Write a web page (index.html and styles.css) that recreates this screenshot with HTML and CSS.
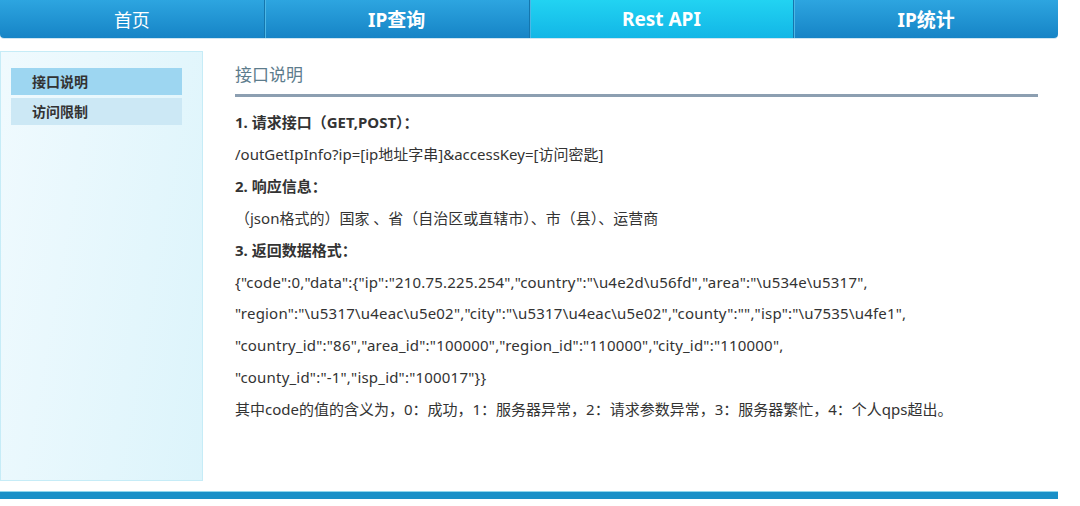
FILE: index.html
```html
<!DOCTYPE html>
<html lang="zh-CN">
<head>
<meta charset="utf-8">
<title>Rest API</title>
<link rel="stylesheet" href="styles.css">
</head>
<body>
<div class="page">
  <nav class="nav">
    <a class="tab tab-light">首页</a>
    <a class="tab">IP查询</a>
    <a class="tab active">Rest API</a>
    <a class="tab">IP统计</a>
  </nav>
  <div class="main">
    <aside class="side">
      <div class="item current">接口说明</div>
      <div class="item">访问限制</div>
    </aside>
    <section class="content">
      <h2 class="title">接口说明</h2>
      <p class="b first">1. 请求接口（GET,POST）：</p>
      <p>/outGetIpInfo?ip=[ip地址字串]&amp;accessKey=[访问密匙]</p>
      <p class="b">2. 响应信息：</p>
      <p>（json格式的）国家 、省（自治区或直辖市）、市（县）、运营商</p>
      <p class="b">3. 返回数据格式：</p>
      <p class="json">{"code":0,"data":{"ip":"210.75.225.254","country":"\u4e2d\u56fd","area":"\u534e\u5317",</p>
      <p class="json">"region":"\u5317\u4eac\u5e02","city":"\u5317\u4eac\u5e02","county":"","isp":"\u7535\u4fe1",</p>
      <p class="json">"country_id":"86","area_id":"100000","region_id":"110000","city_id":"110000",</p>
      <p class="json">"county_id":"-1","isp_id":"100017"}}</p>
      <p>其中code的值的含义为，0：成功，1：服务器异常，2：请求参数异常，3：服务器繁忙，4：个人qps超出。</p>
    </section>
  </div>
  <footer class="foot"></footer>
</div>
</body>
</html>
```
FILE: styles.css
```css
html, body {
  margin: 0;
  padding: 0;
  background: #fff;
}
body {
  font-family: "Noto Sans", "Noto Sans CJK SC", sans-serif;
  color: #333;
}
.page {
  width: 1058px;
}
.nav {
  display: flex;
  height: 38px;
  border-radius: 0 0 4px 4px;
  overflow: hidden;
  background: linear-gradient(#2da5e0, #1684c6);
  box-shadow: 0 1px 0 #cfe6f2;
}
.tab {
  flex: 1;
  display: flex;
  align-items: center;
  justify-content: center;
  color: #fff;
  font-size: 19px;
  font-weight: bold;
  font-family: "Noto Sans", "Noto Sans CJK SC", sans-serif;
}
.tab + .tab {
  border-left: 1px solid #1576ad;
  box-shadow: inset 1px 0 0 #4cb7e6;
}
.tab-light {
  font-weight: normal;
  font-size: 18px;
}
.tab.active {
  background: linear-gradient(#22d3f2, #12b6e6);
}
.main {
  display: flex;
  margin-top: 13px;
}
.side {
  width: 201px;
  height: 412px;
  border: 1px solid #c6ecf7;
  background: linear-gradient(100deg, #f0fafe, #dcf4fb);
  padding-top: 16px;
}
.item {
  margin: 0 20px 3px 10px;
  height: 27px;
  line-height: 27px;
  padding-left: 21px;
  font-size: 14px;
  font-weight: bold;
  color: #333;
  background: #cce8f5;
}
.item.current {
  background: #9dd6f1;
}
.content {
  flex: 1;
  padding: 12px 20px 0 32px;
}
.title {
  margin: 0;
  font-size: 17px;
  font-weight: normal;
  line-height: 24px;
  color: #5d7c8c;
  padding-bottom: 7px;
  border-bottom: 3px solid #8c9fb1;
}
.content p {
  margin: 0;
  font-size: 15px;
  line-height: 31.9px;
  white-space: nowrap;
}
.content p.first {
  margin-top: 10px;
}
.content p.b {
  font-weight: bold;
}
.content p.json {
  letter-spacing: 0.2px;
}
.foot {
  margin-top: 10px;
  height: 7px;
  background: #1a90c8;
  border-top: 1px solid #8fd6ee;
}
```
